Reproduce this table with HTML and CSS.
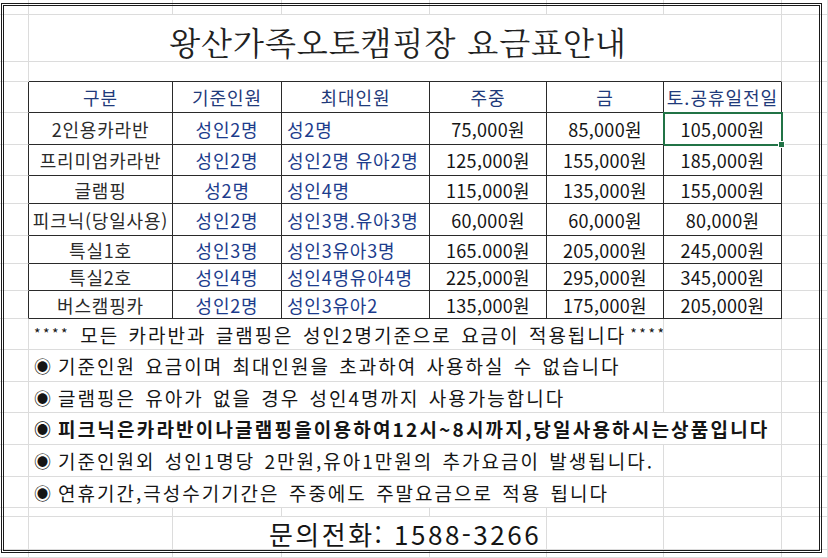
FILE: index.html
```html
<!DOCTYPE html>
<html lang="ko">
<head>
<meta charset="utf-8">
<title>왕산가족오토캠핑장 요금표안내</title>
<link rel="stylesheet" href="styles.css">
</head>
<body>
<div class="sheet">
  <!-- row 0 -->
  <div class="c"></div><div class="c"></div><div class="c"></div><div class="c"></div><div class="c"></div><div class="c"></div><div class="c"></div><div class="c"></div>
  <!-- title -->
  <div class="c"></div><div class="c title span6">왕산가족오토캠핑장 요금표안내</div><div class="c"></div>
  <!-- spacer -->
  <div class="c"></div><div class="c span6 dk-b"></div><div class="c"></div>

  <!-- header -->
  <div class="c dk-r"></div>
  <div class="c t th">구분</div><div class="c t th">기준인원</div><div class="c t th">최대인원</div><div class="c t th">주중</div><div class="c t th">금</div><div class="c t th">토.공휴일전일</div>
  <div class="c"></div>

  <div class="c dk-r"></div>
  <div class="c t name">2인용카라반</div><div class="c t blue">성인2명</div><div class="c t blue left">성2명</div><div class="c t">75,000원</div><div class="c t">85,000원</div><div class="c t sel">105,000원</div>
  <div class="c"></div>

  <div class="c dk-r"></div>
  <div class="c t name">프리미엄카라반</div><div class="c t blue">성인2명</div><div class="c t blue left">성인2명 유아2명</div><div class="c t">125,000원</div><div class="c t">155,000원</div><div class="c t">185,000원</div>
  <div class="c"></div>

  <div class="c dk-r"></div>
  <div class="c t name">글램핑</div><div class="c t blue">성2명</div><div class="c t blue left">성인4명</div><div class="c t">115,000원</div><div class="c t">135,000원</div><div class="c t">155,000원</div>
  <div class="c"></div>

  <div class="c dk-r"></div>
  <div class="c t name">피크닉(당일사용)</div><div class="c t blue">성인2명</div><div class="c t blue left">성인3명.유아3명</div><div class="c t">60,000원</div><div class="c t">60,000원</div><div class="c t">80,000원</div>
  <div class="c"></div>

  <div class="c dk-r"></div>
  <div class="c t name">특실1호</div><div class="c t blue">성인3명</div><div class="c t blue left">성인3유아3명</div><div class="c t">165.000원</div><div class="c t">205,000원</div><div class="c t">245,000원</div>
  <div class="c"></div>

  <div class="c dk-r"></div>
  <div class="c t name">특실2호</div><div class="c t blue">성인4명</div><div class="c t blue left">성인4명유아4명</div><div class="c t">225,000원</div><div class="c t">295,000원</div><div class="c t">345,000원</div>
  <div class="c"></div>

  <div class="c dk-r"></div>
  <div class="c t name">버스캠핑카</div><div class="c t blue">성인2명</div><div class="c t blue left">성인3유아2</div><div class="c t">135,000원</div><div class="c t">175,000원</div><div class="c t">205,000원</div>
  <div class="c"></div>

  <!-- notes -->
  <div class="c"></div><div class="c note span5 clip"><span class="stars">****</span>모든 카라반과 글램핑은 성인2명기준으로 요금이 적용됩니다 <span class="stars">****</span></div><div class="c"></div><div class="c"></div>
  <div class="c"></div><div class="c note span5"><span class="dot">◉</span>기준인원 요금이며 최대인원을 초과하여 사용하실 수 없습니다</div><div class="c"></div><div class="c"></div>
  <div class="c"></div><div class="c note span5"><span class="dot">◉</span>글램핑은 유아가 없을 경우 성인4명까지 사용가능합니다</div><div class="c"></div><div class="c"></div>
  <div class="c"></div><div class="c note span6 bold"><span class="dot">◉</span>피크닉은카라반이나글램핑을이용하여12시~8시까지,당일사용하시는상품입니다</div><div class="c"></div>
  <div class="c"></div><div class="c note span5"><span class="dot">◉</span>기준인원외 성인1명당 2만원,유아1만원의 추가요금이 발생됩니다.</div><div class="c"></div><div class="c"></div>
  <div class="c"></div><div class="c note span5"><span class="dot">◉</span>연휴기간,극성수기기간은 주중에도 주말요금으로 적용 됩니다</div><div class="c"></div><div class="c"></div>

  <!-- strip -->
  <div class="c"></div><div class="c"></div><div class="c"></div><div class="c"></div><div class="c"></div><div class="c"></div><div class="c"></div><div class="c"></div>
  <!-- contact -->
  <div class="c"></div><div class="c span6 contact">문의전화: 1588-3266</div><div class="c"></div>
  <!-- last -->
  <div class="c"></div><div class="c"></div><div class="c"></div><div class="c"></div><div class="c"></div><div class="c"></div><div class="c"></div><div class="c"></div>

  <div class="frame"></div>
</div>
</body>
</html>
```

FILE: styles.css
```css
html, body {
  margin: 0;
  padding: 0;
  background: #fff;
}

.sheet {
  position: relative;
  width: 828px;
  height: 558px;
  overflow: hidden;
  display: grid;
  grid-template-columns: 29px 144px 109px 148px 117px 117px 118px 46px;
  grid-template-rows: 15px 47px 20px 31px 32px 31px 28px 32px 28px 27px 28px 31px 32px 31px 32px 32px 31px 9px 33px 8px;
  font-family: "Noto Sans CJK KR", "Noto Sans", sans-serif;
  font-size: 18px;
  color: #151515;
}

.c {
  box-sizing: border-box;
  border-right: 1px solid #dcdcdc;
  border-bottom: 1px solid #dcdcdc;
  display: flex;
  align-items: center;
  min-width: 0;
  white-space: nowrap;
  position: relative;
}

.span5 { grid-column: span 5; }
.span6 { grid-column: span 6; }

.dk-r { border-right-color: #2a2a2a; }
.dk-b { border-bottom-color: #2a2a2a; }

.title {
  justify-content: center;
  font-family: "Noto Serif CJK KR", "Noto Sans CJK KR", serif;
  font-size: 32px;
  font-weight: 400;
  color: #222;
  letter-spacing: 1px;
  padding-top: 6px;
  padding-right: 14px;
}

.t {
  border-right-color: #2a2a2a;
  border-bottom-color: #2a2a2a;
  justify-content: center;
  letter-spacing: 0.3px;
  line-height: 1;
}

.th { color: #1f3a7a; letter-spacing: 1px; }
.name { color: #2b2b2b; letter-spacing: 0.8px; }
.blue { color: #1c3c8c; letter-spacing: 0.8px; }
.left { justify-content: flex-start; padding-left: 5px; }

.sel::after {
  content: "";
  position: absolute;
  left: -1px;
  top: -1px;
  right: -2px;
  bottom: -2px;
  border: 2px solid #217346;
  pointer-events: none;
}
.sel::before {
  content: "";
  position: absolute;
  right: -4px;
  bottom: -4px;
  width: 5px;
  height: 5px;
  background: #217346;
  border: 1px solid #fff;
  z-index: 2;
}

.note {
  padding-left: 5px;
  font-size: 19px;
  letter-spacing: 2px;
  word-spacing: 2px;
  overflow: visible;
  z-index: 1;
}
.note.clip { overflow: hidden; }
.note.bold { font-weight: 700; letter-spacing: 2.2px; word-spacing: 0; }
.stars {
  font-size: 14px;
  letter-spacing: 2.5px;
  margin-right: 10px;
  position: relative;
  top: -1px;
}
.stars:last-child { margin-left: 4px; margin-right: 0; }
.dot {
  font-size: 17px;
  letter-spacing: 0;
  margin-right: 7px;
}

.contact {
  justify-content: center;
  font-size: 26px;
  letter-spacing: 2.5px;
  padding-top: 0;
  background:
    linear-gradient(#dcdcdc, #dcdcdc) 143px 0 / 1px 100% no-repeat,
    linear-gradient(#dcdcdc, #dcdcdc) 517px 0 / 1px 100% no-repeat,
    linear-gradient(#dcdcdc, #dcdcdc) 634px 0 / 1px 100% no-repeat;
}

.frame {
  position: absolute;
  left: 1px;
  top: 3px;
  width: 821px;
  height: 550px;
  box-sizing: border-box;
  border: 3px double #1a1a1a;
  pointer-events: none;
}
```
